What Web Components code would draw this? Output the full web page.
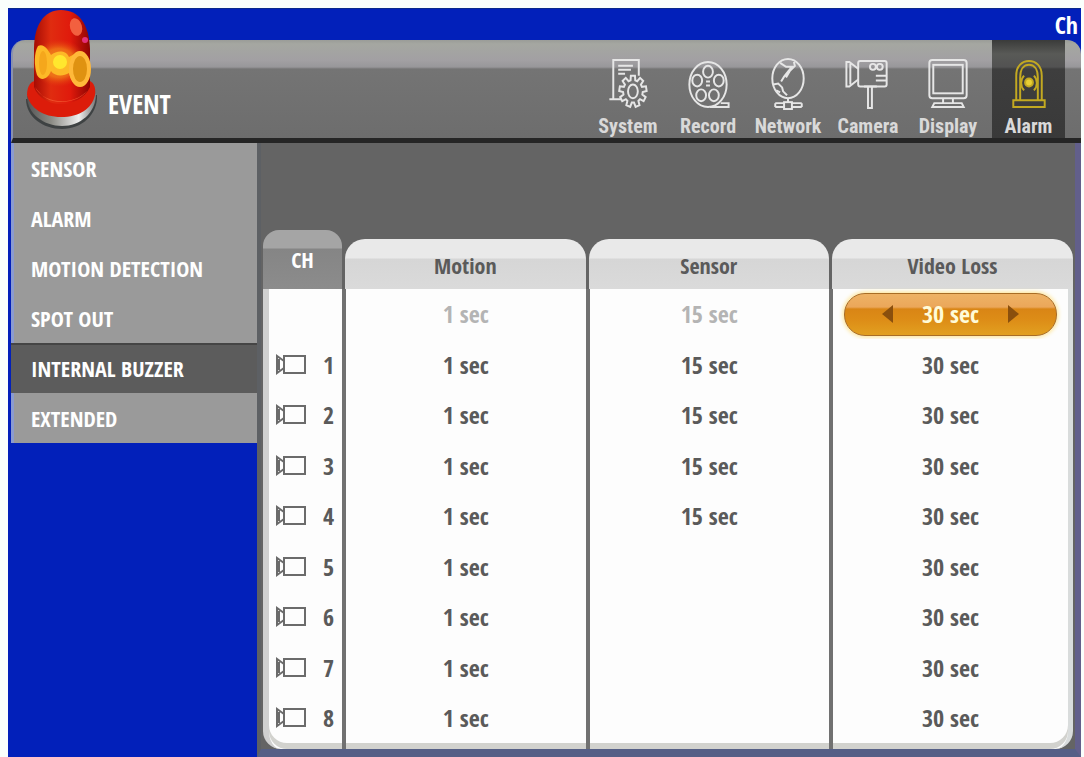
<!DOCTYPE html>
<html lang="en">
<head>
<meta charset="utf-8">
<title>Event – Internal Buzzer</title>
<style>
html, body { height: 100%; }
body { margin: 0; background: #fafffc; font-family: "Open Sans Condensed", "Roboto Condensed", "Liberation Sans", sans-serif; font-weight: 700; }
</style>
</head>
<body>
<dvr-screen></dvr-screen>

<template id="screen">
<style>
:host { display: block; box-sizing: border-box; min-height: 100vh; padding: 8px 3px 0 8px; }
.screen { display: flex; flex-direction: column; min-height: calc(100vh - 8px); background: #0220ba; }
.status { height: 32px; display: flex; justify-content: flex-end; align-items: center; padding-right: 3px; color: #fff; font-size: 24px; line-height: 32px; border-top: 1px solid #0a2a8c; box-sizing: border-box; }
.panel { flex: 1; display: flex; flex-direction: column; margin-left: 3px; }
.body { flex: 1; display: flex; }
main { flex: 1; background: #646464; border-right: 6px solid #625f8b; border-bottom: 8px solid #555f86; border-left: 4px solid #5d6064; padding: 87px 2px 0 2px; }
</style>
<div class="screen">
  <div class="status">Ch</div>
  <div class="panel">
    <dvr-header heading="EVENT">
      <dvr-tab icon="system">System</dvr-tab>
      <dvr-tab icon="record">Record</dvr-tab>
      <dvr-tab icon="network">Network</dvr-tab>
      <dvr-tab icon="camera">Camera</dvr-tab>
      <dvr-tab icon="display">Display</dvr-tab>
      <dvr-tab icon="alarm" active>Alarm</dvr-tab>
    </dvr-header>
    <div class="body">
      <dvr-menu>
        <dvr-menu-item>SENSOR</dvr-menu-item>
        <dvr-menu-item>ALARM</dvr-menu-item>
        <dvr-menu-item>MOTION DETECTION</dvr-menu-item>
        <dvr-menu-item>SPOT OUT</dvr-menu-item>
        <dvr-menu-item active>INTERNAL BUZZER</dvr-menu-item>
        <dvr-menu-item>EXTENDED</dvr-menu-item>
      </dvr-menu>
      <main><dvr-table></dvr-table></main>
    </div>
  </div>
</div>
</template>

<template id="header">
<style>
:host { display: block; }
header { position: relative; display: flex; height: 103px; box-sizing: border-box; border-bottom: 5px solid #252525; border-radius: 14px 14px 0 0; padding-right: 16px;
  background: linear-gradient(#9a9c98 0, #a5a7a1 4px, #a2a0a3 20px, #98979a 27px, #747474 29px, #6d6d6d 100%); border-left: 2px solid #8991b0; }
dvr-beacon { position: absolute; left: 10px; top: -33px; }
h1 { flex: 1; margin: 0; padding: 48px 0 0 95px; font-size: 26px; line-height: 32px; color: #fff; font-weight: 700; }
nav { display: flex; }
</style>
<header>
  <dvr-beacon></dvr-beacon>
  <h1></h1>
  <nav aria-label="Settings"><slot></slot></nav>
</header>
</template>

<template id="beacon">
<style>:host { display: block; } svg { display: block; }</style>
<svg width="78" height="124" viewBox="0 0 78 124" aria-hidden="true">
  <defs>
    <linearGradient id="g" x1="0" x2="1"><stop offset="0" stop-color="#a60c04"/><stop offset=".3" stop-color="#e02c10"/><stop offset=".65" stop-color="#e01a0c"/><stop offset="1" stop-color="#8e0503"/></linearGradient>
    <linearGradient id="b" x1="0" x2="1"><stop offset="0" stop-color="#555"/><stop offset=".35" stop-color="#8b8b85"/><stop offset=".75" stop-color="#eee"/><stop offset="1" stop-color="#777"/></linearGradient>
    <radialGradient id="y"><stop offset="0" stop-color="#ffe83a"/><stop offset=".6" stop-color="#f8a31b"/><stop offset="1" stop-color="#e4410f" stop-opacity="0"/></radialGradient>
  </defs>
  <path d="M3 92C3 110 20 122 39 122S75 108 74 88Z" fill="#3e4243"/>
  <path d="M4 89C4 107 21 119 39 119S73 106 73 87Z" fill="url(#b)"/>
  <path d="M4 88C4 78 9 74 12 74H67C71 76 73 81 72 88C69 102 56 110 38 110S7 101 4 88Z" fill="#dc1c0a"/>
  <path d="M11 42C11 18 21 3 38 3C56 3 66 17 67 42V80C62 91 50 97 38 97S15 91 11 80Z" fill="url(#g)"/>
  <path d="M12 80C20 98 57 100 67 79C62 90 50 95 38 95S19 90 12 80Z" fill="#f0502c"/>
  <ellipse cx="36" cy="56" rx="28" ry="24" fill="url(#y)" opacity=".55"/>
  <path d="M15 39C21 36 25 43 28 48C34 43 43 43 46 50L57 44V79C51 77 48 74 46 66C40 70 31 69 28 64C25 72 18 75 14 68C11 58 11 46 15 39Z" fill="#fdb927"/>
  <ellipse cx="20" cy="56" rx="4" ry="12" fill="#f5a71c"/>
  <circle cx="37" cy="55" r="7" fill="#ffe72e"/>
  <ellipse cx="57" cy="62" rx="11" ry="18" fill="#ffb93a"/>
  <ellipse cx="57" cy="62" rx="7" ry="13" fill="#df9211"/>
  <ellipse cx="53" cy="20" rx="6" ry="9" fill="#f2603f" transform="rotate(-15 53 20)"/>
  <circle cx="62" cy="33" r="3" fill="#e3307a"/>
</svg>
</template>

<template id="tab">
<style>
:host { display: block; }
:host([active]) { margin-left: 4px; }
button { width: 80px; height: 98px; padding: 17px 0 0; border: 0; background: none; display: flex; flex-direction: column; align-items: center; gap: 4px; color: #d9d9d9; font: 700 20px/24px "Roboto Condensed", "Open Sans Condensed", sans-serif; }
:host([active]) button { width: 73px; background: linear-gradient(#3a3b3a 0, #595a57 14px, #525252 27px, #3e3e3e 29px, #393939 100%); }
svg { display: block; width: 48px; height: 54px; fill: none; stroke: #e6e6e6; stroke-width: 2; }
:host([icon="alarm"]) svg { stroke: #c3a921; }
</style>
<button type="button"><svg viewBox="0 0 48 54" aria-hidden="true"></svg><slot></slot></button>
</template>

<template id="menu">
<style>:host { display: block; width: 246px; } nav { border-left: 3px solid #8b9bd0; background: #9a9a9a; }</style>
<nav aria-label="Event"><slot></slot></nav>
</template>

<template id="menu-item">
<style>
:host { display: block; }
a { display: block; padding: 0 0 0 17px; height: 50px; font-size: 22px; line-height: 50px; color: #fff; text-decoration: none; }
:host([active]) a { background: #5c5c5c; margin-left: -3px; padding-left: 20px; box-shadow: inset 0 2px #454545; }
</style>
<a href="#"><slot></slot></a>
</template>

<template id="spinner">
<style>
:host { display: block; margin: 0 11px; }
.pill { height: 43px; box-sizing: border-box; border: 1px solid #a96d26; border-radius: 21px; display: flex; align-items: center; justify-content: center; gap: 28px; color: #fffbd8; box-shadow: 0 0 4px 1px #ffe28a;
  background: linear-gradient(#eeb265 0, #eba75a 13px, #d98515 15px, #dd8d17 26px, #e2a020 100%); }
button { padding: 0; border: 0; background: none; display: block; }
svg { display: block; fill: #8a4f0d; }
</style>
<div class="pill">
  <button type="button" aria-label="Decrease"><svg width="13" height="18" viewBox="0 0 13 18"><path d="M12 0V18L1 9Z"/></svg></button>
  <slot></slot>
  <button type="button" aria-label="Increase"><svg width="13" height="18" viewBox="0 0 13 18"><path d="M1 0V18L12 9Z"/></svg></button>
</div>
</template>

<template id="table">
<style>
:host { display: block; }
table { width: 100%; table-layout: fixed; border-collapse: separate; border-spacing: 0; color: #5a5a5a; font-size: 24px; line-height: 28px; }
col.ch { width: 79px; } col.video { width: 244px; }
th { padding: 0; vertical-align: bottom; font-size: 22px; font-weight: 700; }
th div { height: 50px; line-height: 52px; border-radius: 20px 20px 0 0; background: linear-gradient(#e9e9e9 19px, #d6d6d6 20px, #dadada); }
th:not(:first-child) { padding-left: 3px; }
th:first-child div { height: 59px; line-height: 58px; color: #fff; background: linear-gradient(#a5a5a5 18px, #858585 19px, #8c8c8c); border-radius: 16px 16px 0 0; }
td { height: 50px; box-sizing: border-box; padding: 0; text-align: center; background: #fdfdfd; border-left: 4px solid #717171; }
tr:nth-child(even) td { height: 51px; }
td:first-child { border-left: 6px solid #d0d0d0; }
td:last-child { border-right: 5px solid #d9dcdc; }
tr:last-child td { padding-bottom: 6px; height: 56px; box-shadow: inset 0 -6px #d2d2ce; }
tr:last-child td:first-child { border-bottom-left-radius: 18px; }
tr:last-child td:last-child { border-bottom-right-radius: 18px; }
tr.all td { color: #b4b4b4; }
.cam { display: flex; align-items: center; justify-content: space-between; padding: 0 8px 0 6px; }
svg { display: block; fill: none; stroke: #6b6b6b; stroke-width: 2; }
</style>
<table>
  <colgroup><col class="ch"><col><col><col class="video"></colgroup>
  <thead><tr><th scope="col"><div>CH</div></th><th scope="col"><div>Motion</div></th><th scope="col"><div>Sensor</div></th><th scope="col"><div>Video Loss</div></th></tr></thead>
  <tbody><tr class="all"><td></td><td>1 sec</td><td>15 sec</td><td><dvr-spinner>30 sec</dvr-spinner></td></tr></tbody>
</table>
</template>

<script>
const base = id => class extends HTMLElement {
  constructor() {
    super();
    this.attachShadow({ mode: "open" }).append(document.getElementById(id).content.cloneNode(true));
  }
};

const teeth = Array.from({ length: 9 }, (_, i) => {
  const a = i * 40 * Math.PI / 180;
  return [[-.24, 10], [-.15, 14], [.15, 14], [.24, 10]].map(([d, r]) =>
    (29 + r * Math.sin(a + d)).toFixed(1) + " " + (35 - r * 1.15 * Math.cos(a + d)).toFixed(1)).join("L");
}).join("L");

const ICONS = {
  system: `<path d="M17 43H5M9 43V3H35V19M14 9H29M14 13H27M14 17H21"/><path d="M${teeth}Z"/><ellipse cx="29" cy="35" rx="5" ry="7"/>`,
  record: `<ellipse cx="24" cy="28" rx="19" ry="23"/><ellipse cx="24" cy="15" rx="5" ry="6"/><ellipse cx="13" cy="24" rx="5" ry="6"/><ellipse cx="35" cy="24" rx="5" ry="6"/><ellipse cx="17" cy="39" rx="5" ry="6"/><ellipse cx="30" cy="39" rx="5" ry="6"/><path d="M22 25H26M22 29H26M26 51H45V47H37"/>`,
  network: `<ellipse cx="24" cy="22" rx="16" ry="20"/><path d="M16 6L22 10H28L24 15L20 20L17 25M30 5L31 9L26 14L22 21M9 28L14 27L18 31L19 35L23 39M12 34L16 36M24 42V46M11 47H20M28 47H38M11 51H20M28 51H38M11 47V51M38 47V51"/><rect x="20" y="46" width="8" height="7"/>`,
  camera: `<rect x="14" y="4" width="29" height="26" rx="2"/><path d="M14 12L5 5H2V30H5L14 23M6 7V28"/><circle cx="29" cy="10" r="3"/><circle cx="36" cy="10" r="3"/><path d="M32 19H43M32 24H43M20 30H33M24 31V52H28V31"/>`,
  display: `<rect x="5" y="3" width="38" height="39" rx="3"/><rect x="9" y="8" width="30" height="29"/><path d="M19 42V47M29 42V47M10 47H38L40 51H8Z"/>`,
  alarm: `<path d="M11 44V19C11 9 17 4 24 4S37 9 37 19V44M15 44V21C15 12 19 8 24 8S33 12 33 21V44"/><path d="M8 44H40V51H8Z"/><circle cx="24" cy="26" r="4" fill="#e8cf35"/><path d="M19 19C15 23 15 30 19 34M29 19C33 23 33 30 29 34"/>`
};

customElements.define("dvr-screen", base("screen"));
customElements.define("dvr-beacon", base("beacon"));
customElements.define("dvr-header", class extends base("header") {
  connectedCallback() { this.shadowRoot.querySelector("h1").textContent = this.getAttribute("heading"); }
});
customElements.define("dvr-tab", class extends base("tab") {
  connectedCallback() { this.shadowRoot.querySelector("svg").innerHTML = ICONS[this.getAttribute("icon")]; }
});
customElements.define("dvr-menu", base("menu"));
customElements.define("dvr-menu-item", base("menu-item"));
customElements.define("dvr-spinner", base("spinner"));
customElements.define("dvr-table", class extends base("table") {
  connectedCallback() {
    const body = this.shadowRoot.querySelector("tbody");
    for (let ch = 1; ch <= 8; ch++) {
      body.insertAdjacentHTML("beforeend", `<tr><td><div class="cam"><svg width="32" height="22" viewBox="0 0 32 22" aria-hidden="true"><rect x="9" y="2" width="21" height="17"/><path d="M9 7L2 2V19L9 14M4 5V16" stroke-width="2"/></svg>${ch}</div></td><td>1 sec</td><td>${ch <= 4 ? "15 sec" : ""}</td><td>30 sec</td></tr>`);
    }
  }
});
</script>
</body>
</html>
